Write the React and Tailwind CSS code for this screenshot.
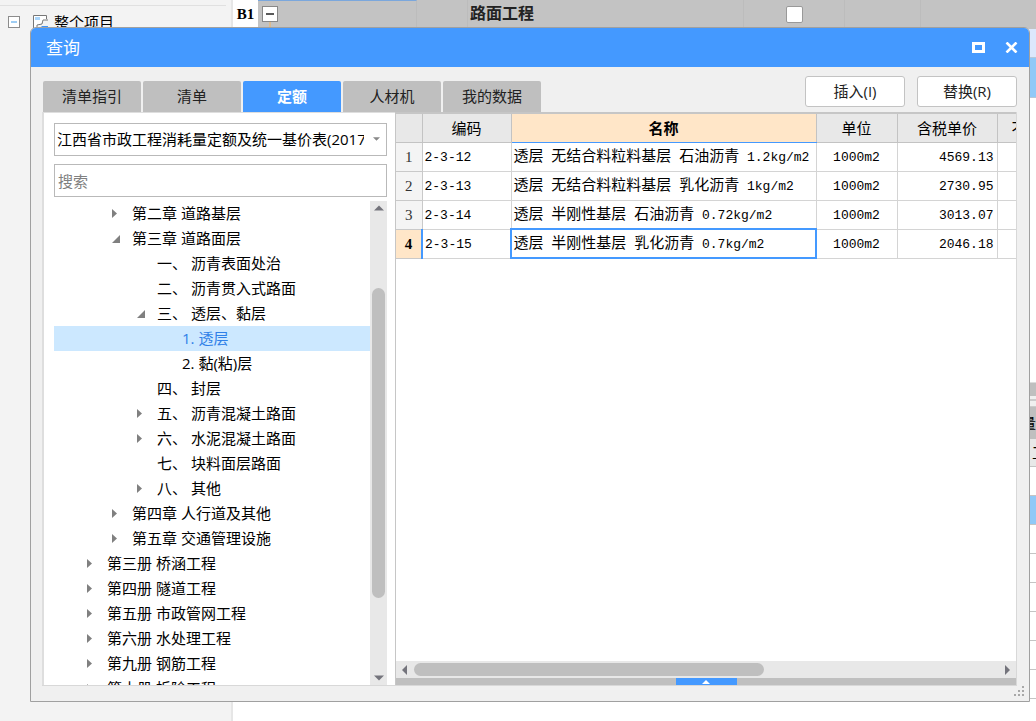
import React, { useState } from 'react';
import clsx from 'clsx';

const tabs = ['清单指引', '清单', '定额', '人材机', '我的数据'];

const tree = [
  { text: '第二章 道路基层', level: 1, state: 'closed' },
  { text: '第三章 道路面层', level: 1, state: 'open' },
  { text: '一、 沥青表面处治', level: 2 },
  { text: '二、 沥青贯入式路面', level: 2 },
  { text: '三、 透层、黏层', level: 2, state: 'open' },
  { text: '1. 透层', level: 3 },
  { text: '2. 黏(粘)层', level: 3 },
  { text: '四、 封层', level: 2 },
  { text: '五、 沥青混凝土路面', level: 2, state: 'closed' },
  { text: '六、 水泥混凝土路面', level: 2, state: 'closed' },
  { text: '七、 块料面层路面', level: 2 },
  { text: '八、 其他', level: 2, state: 'closed' },
  { text: '第四章 人行道及其他', level: 1, state: 'closed' },
  { text: '第五章 交通管理设施', level: 1, state: 'closed' },
  { text: '第三册 桥涵工程', level: 0, state: 'closed' },
  { text: '第四册 隧道工程', level: 0, state: 'closed' },
  { text: '第五册 市政管网工程', level: 0, state: 'closed' },
  { text: '第六册 水处理工程', level: 0, state: 'closed' },
  { text: '第九册 钢筋工程', level: 0, state: 'closed' },
  { text: '第十册 拆除工程', level: 0, state: 'closed' },
];

const quotas = [
  { code: '2-3-12', name: '透层 无结合料粒料基层 石油沥青 1.2kg/m2', unit: '1000m2', price: '4569.13' },
  { code: '2-3-13', name: '透层 无结合料粒料基层 乳化沥青 1kg/m2', unit: '1000m2', price: '2730.95' },
  { code: '2-3-14', name: '透层 半刚性基层 石油沥青 0.72kg/m2', unit: '1000m2', price: '3013.07' },
  { code: '2-3-15', name: '透层 半刚性基层 乳化沥青 0.7kg/m2', unit: '1000m2', price: '2046.18' },
];

// Latin runs use a smaller monospace so they sit evenly next to the Chinese text
function Mixed({ text }) {
  return text.split(/([\x20-\x7e]+)/).map((part, i) =>
    i % 2 ? (
      <span key={i} className="font-['Liberation_Mono',monospace] text-[13px]">{part}</span>
    ) : (
      part
    )
  );
}

function Arrow({ dir, className }) {
  const points = {
    up: '0,6 6,0 12,6',
    down: '0,0 12,0 6,6',
    left: '6,0 6,12 0,6',
    right: '0,0 6,6 0,12',
  }[dir];
  const vertical = dir === 'up' || dir === 'down';
  return (
    <svg
      viewBox={vertical ? '0 0 12 6' : '0 0 6 12'}
      className={clsx('shrink-0', className)}
      aria-hidden="true"
    >
      <polygon points={points} fill="currentColor" />
    </svg>
  );
}

function TreeRow({ item, selected, onSelect }) {
  return (
    <li
      role="treeitem"
      aria-selected={selected}
      className={clsx(
        'flex h-[25px] shrink-0 items-center whitespace-nowrap',
        selected ? 'bg-[#cce8ff] text-[#2f80e8]' : 'text-black'
      )}
      style={{ paddingLeft: 28 + item.level * 25 }}
    >
      <span className="flex w-[25px] shrink-0 pl-[5px]">
        {item.state === 'closed' && (
          <svg viewBox="0 0 5 9" className="h-[9px] w-[5px] text-[#808080]" aria-hidden="true">
            <polygon points="0,0 5,4.5 0,9" fill="currentColor" />
          </svg>
        )}
        {item.state === 'open' && (
          <svg viewBox="0 0 8 8" className="h-2 w-2 text-[#808080]" aria-hidden="true">
            <polygon points="8,0 8,8 0,8" fill="currentColor" />
          </svg>
        )}
      </span>
      <button onClick={onSelect} className="leading-[25px]">{item.text}</button>
    </li>
  );
}

function Backdrop() {
  return (
    <div className="flex h-full">
      <aside className="w-[233px] shrink-0 border-r-2 border-[#e6e6e6] bg-[#f3f3f3] pt-[5px]">
        <div className="mr-[5px] border-t border-[#e0e0e0] pt-[5px]">
          <div className="flex h-[22px] items-center pl-2">
            <svg viewBox="0 0 12 12" className="h-3 w-3" aria-hidden="true">
              <rect x="0.5" y="0.5" width="11" height="11" fill="#fff" stroke="#8c8c8c" />
              <path d="M3 6h6" stroke="#3f9be8" />
            </svg>
            <svg viewBox="0 0 17 17" className="ml-3 h-[17px] w-[17px]" aria-hidden="true">
              <path d="M1.5 16V1.5h13V5" fill="#fff" stroke="#777" />
              <path d="M3 3h5v3H3z" fill="#a9d5fb" />
              <path d="M5 15v-4l5-1 1-4h5" fill="none" stroke="#777" />
              <path d="M7 15l3-3h6v3z" fill="#3f94f7" />
            </svg>
            <span className="ml-[5px] text-[15px] leading-5">整个项目</span>
          </div>
        </div>
      </aside>
      <main className="flex min-w-0 flex-1 flex-col bg-white">
        <div className="flex h-[29px] shrink-0 bg-[#c3c3c3]">
          <div className="flex w-[25px] items-center justify-center bg-white font-['Liberation_Serif',serif] text-[15px] font-bold">
            B1
          </div>
          <div className="flex w-[159px] border-t border-r border-t-[#7ba7dc] border-r-[#bcbcbc] pt-[5px] pl-1">
            <svg viewBox="0 0 16 24" className="h-6 w-4" aria-hidden="true">
              <path d="M8 16v8" stroke="#f5b45f" />
              <rect x="0.5" y="0.5" width="15" height="15" fill="#fff" stroke="#888" />
              <path d="M4 8h8" stroke="#222" strokeWidth="1.5" />
            </svg>
          </div>
          <div className="w-[51px] border-r border-[#bcbcbc]" />
          <div className="w-[276px] border-r border-[#bcbcbc] pl-[2px] text-base leading-[27px] font-bold text-[#222]">
            路面工程
          </div>
          <div className="flex w-[101px] items-center justify-center border-r border-[#bcbcbc]">
            <input
              type="checkbox"
              aria-label="路面工程"
              className="h-[17px] w-[17px] appearance-none rounded-[2px] border border-[#999] bg-white"
            />
          </div>
          <div className="w-[76px] border-r border-[#bcbcbc]" />
        </div>
        <div className="h-[28px] shrink-0 bg-[#dce8fc]" />
        <div className="h-[41px] shrink-0 border-y border-[#b8c8d8] bg-[#91c9f7]" />
        <div className="h-[284px] shrink-0" />
        <div className="h-[14px] shrink-0 border-t border-[#ddd] bg-[#bfbfbf]" />
        <div className="h-[11px] shrink-0 border-b border-[#ccc] bg-[#f0f0f0] pt-[3px]">
          <div className="border-t-2 border-[#ccc]" />
        </div>
        <div className="flex h-[32px] shrink-0 justify-end bg-[#bfbfbf] text-[15px] leading-8">量</div>
        <div className="flex h-[28px] shrink-0 justify-end overflow-hidden border-b border-[#c4c4c4] bg-[#e8e8e8]">
          <span className="w-1 overflow-hidden text-[15px] leading-[26px]">工</span>
        </div>
        <div className="h-[29px] shrink-0 border-b border-[#c4c4c4]" />
        <div className="h-[29px] shrink-0 border-b border-[#c4c4c4] bg-[#91c9f7]" />
        {[0, 1, 2, 3, 4, 5].map(i => (
          <div key={i} className="h-[29px] shrink-0 border-b border-[#c4c4c4]" />
        ))}
      </main>
    </div>
  );
}

function QuotaTable() {
  const [current, setCurrent] = useState(3);
  const head = 'border-r border-b border-[#c3c3c3] font-normal';

  return (
    <table className="w-full table-fixed border-collapse text-[15px] leading-5 text-black">
      <colgroup>
        <col className="w-[26px]" />
        <col className="w-[89px]" />
        <col />
        <col className="w-[81px]" />
        <col className="w-[100px]" />
        <col className="w-[19px]" />
      </colgroup>
      <thead>
        <tr className="h-[28px] bg-[#e8e8e8]">
          <th className={head} aria-label="序号" />
          <th className={head}>编码</th>
          <th className="border-r border-b border-r-[#c3c3c3] border-b-[#4499ff] bg-[#ffe6c8] font-bold">名称</th>
          <th className={head}>单位</th>
          <th className={head}>含税单价</th>
          <th className="overflow-hidden border-b border-[#c3c3c3] pl-[14px] text-left font-normal whitespace-nowrap">
            不含税单价
          </th>
        </tr>
      </thead>
      <tbody>
        {quotas.map((q, i) => {
          const active = i === current;
          return (
            <tr key={q.code} onClick={() => setCurrent(i)} className="h-[29px] whitespace-nowrap">
              <th
                className={clsx(
                  "border-b border-[#c9c9c9] font-['Liberation_Serif',serif]",
                  active
                    ? 'border-r-2 border-r-[#4499ff] bg-[#ffe6c8] font-bold'
                    : 'border-r bg-[#f4f4f4] font-normal text-[#333]'
                )}
              >
                {i + 1}
              </th>
              <td className="border-r border-b border-[#d4d4d4] pl-[2px]"><Mixed text={q.code} /></td>
              <td
                className={clsx(
                  'overflow-hidden border-r border-b border-[#d4d4d4] pl-[2px]',
                  active && 'outline-2 -outline-offset-1 outline-[#4499ff]'
                )}
              >
                <Mixed text={q.name} />
              </td>
              <td className="border-r border-b border-[#d4d4d4] text-center"><Mixed text={q.unit} /></td>
              <td className="border-r border-b border-[#d4d4d4] pr-[3px] text-right"><Mixed text={q.price} /></td>
              <td className="border-b border-[#d4d4d4]" />
            </tr>
          );
        })}
      </tbody>
    </table>
  );
}

export default function App() {
  const [tab, setTab] = useState('定额');
  const [selected, setSelected] = useState('1. 透层');

  return (
    <div className="relative h-screen overflow-hidden font-['Open_Sans','Noto_Sans_CJK_SC',sans-serif]">
      <Backdrop />

      <section
        role="dialog"
        aria-label="查询"
        className="absolute top-[27px] right-[6px] bottom-[19px] left-[30px] flex flex-col overflow-hidden rounded-t-md border border-[#a0a0a0] bg-[#f0f0f0] text-[15px]"
      >
        <header className="flex h-[39px] shrink-0 items-center justify-between bg-[#4499ff] pr-[11px] pl-[15px] text-white">
          <h1 className="text-[17px] leading-6">查询</h1>
          <div className="flex items-center gap-5">
            <button aria-label="最大化">
              <svg viewBox="0 0 13 11" className="h-[11px] w-[13px]" aria-hidden="true">
                <rect x="1.5" y="1.5" width="10" height="8" fill="none" stroke="#fff" strokeWidth="3" />
              </svg>
            </button>
            <button aria-label="关闭">
              <svg viewBox="0 0 13 11" className="h-[11px] w-[13px]" aria-hidden="true">
                <path d="M1.5 0.5l10 10M11.5 0.5l-10 10" stroke="#fff" strokeWidth="2.6" />
              </svg>
            </button>
          </div>
        </header>

        <div className="flex shrink-0 items-end justify-between pt-[9px] pr-3 pl-3">
          <div role="tablist" className="flex gap-[2px] pt-[5px]">
            {tabs.map(t => (
              <button
                key={t}
                role="tab"
                aria-selected={t === tab}
                onClick={() => setTab(t)}
                className={clsx(
                  'h-[31px] w-[98px] rounded-t-[2px]',
                  t === tab ? 'bg-[#4499ff] font-bold text-white' : 'bg-[#bfbfbf] text-[#222]'
                )}
              >
                {t}
              </button>
            ))}
          </div>
          <div className="flex gap-3 pb-[5px]">
            <button className="h-[31px] w-[100px] rounded-[3px] border border-[#c3c3c3] bg-white text-[#222]">插入(I)</button>
            <button className="h-[31px] w-[100px] rounded-[3px] border border-[#c3c3c3] bg-white text-[#222]">替换(R)</button>
          </div>
        </div>

        <div className="mr-3 mb-[15px] ml-[11px] flex min-h-0 flex-1 border-r border-b border-[#d8d8d8]">
          <div className="flex w-[353px] shrink-0 flex-col border-t border-l-2 border-[#dedede] bg-white pt-[10px] pr-2 pl-[10px]">
            <div className="relative shrink-0">
              <select
                aria-label="定额库"
                className="block h-[33px] w-full appearance-none overflow-hidden border border-[#b9b9b9] bg-white pr-[22px] pl-[2px] text-black"
              >
                <option>江西省市政工程消耗量定额及统一基价表(2017)</option>
              </select>
              <Arrow dir="down" className="pointer-events-none absolute top-[14px] right-[7px] h-1 w-[7px] text-[#888]" />
            </div>
            <input
              type="text"
              aria-label="搜索"
              placeholder="搜索"
              className="mt-2 h-[33px] w-full shrink-0 border border-[#b9b9b9] bg-white pl-[3px] placeholder:text-[#808080]"
            />
            <div className="mt-1 flex min-h-0 flex-1">
              <ul role="tree" className="flex min-w-0 flex-1 flex-col overflow-hidden">
                {tree.map(item => (
                  <TreeRow
                    key={item.text}
                    item={item}
                    selected={item.text === selected}
                    onSelect={() => setSelected(item.text)}
                  />
                ))}
              </ul>
              <div className="flex w-[17px] shrink-0 flex-col items-center bg-[#e8e8e8] py-1 text-[#74747c]">
                <Arrow dir="up" className="h-[6px] w-[10px]" />
                <div className="flex w-[13px] flex-1 flex-col">
                  <div className="flex-[77]" />
                  <div className="flex-[310] rounded-full bg-[#bfbfbf]" />
                  <div className="flex-[77]" />
                </div>
                <Arrow dir="down" className="h-[6px] w-[10px]" />
              </div>
            </div>
          </div>

          <div className="flex min-w-0 flex-1 flex-col border-t-2 border-l border-[#c6c6c6] bg-white">
            <div className="min-h-0 flex-1">
              <QuotaTable />
            </div>
            <div className="flex h-[17px] shrink-0 items-center bg-[#e8e8e8] px-[6px] text-[#74747c]">
              <Arrow dir="left" className="h-[10px] w-[5px]" />
              <div className="mx-[7px] flex h-[13px] flex-1">
                <div className="flex-[350] rounded-full bg-[#bfbfbf]" />
                <div className="flex-[234]" />
              </div>
              <Arrow dir="right" className="h-[10px] w-[5px]" />
            </div>
            <div className="flex h-[7px] shrink-0 justify-center bg-[#bfbfbf]">
              <button aria-label="展开" className="flex w-[61px] items-center justify-center bg-[#4499ff] text-white">
                <Arrow dir="up" className="h-1 w-2" />
              </button>
            </div>
          </div>
        </div>

        <svg
          viewBox="0 0 11 11"
          className="absolute right-1 bottom-1 h-[11px] w-[11px] text-[#a8a8a8]"
          fill="currentColor"
          aria-hidden="true"
        >
          <path d="M8 0h2v2H8zM4 4h2v2H4zM8 4h2v2H8zM0 8h2v2H0zM4 8h2v2H4zM8 8h2v2H8z" />
        </svg>
      </section>
    </div>
  );
}
